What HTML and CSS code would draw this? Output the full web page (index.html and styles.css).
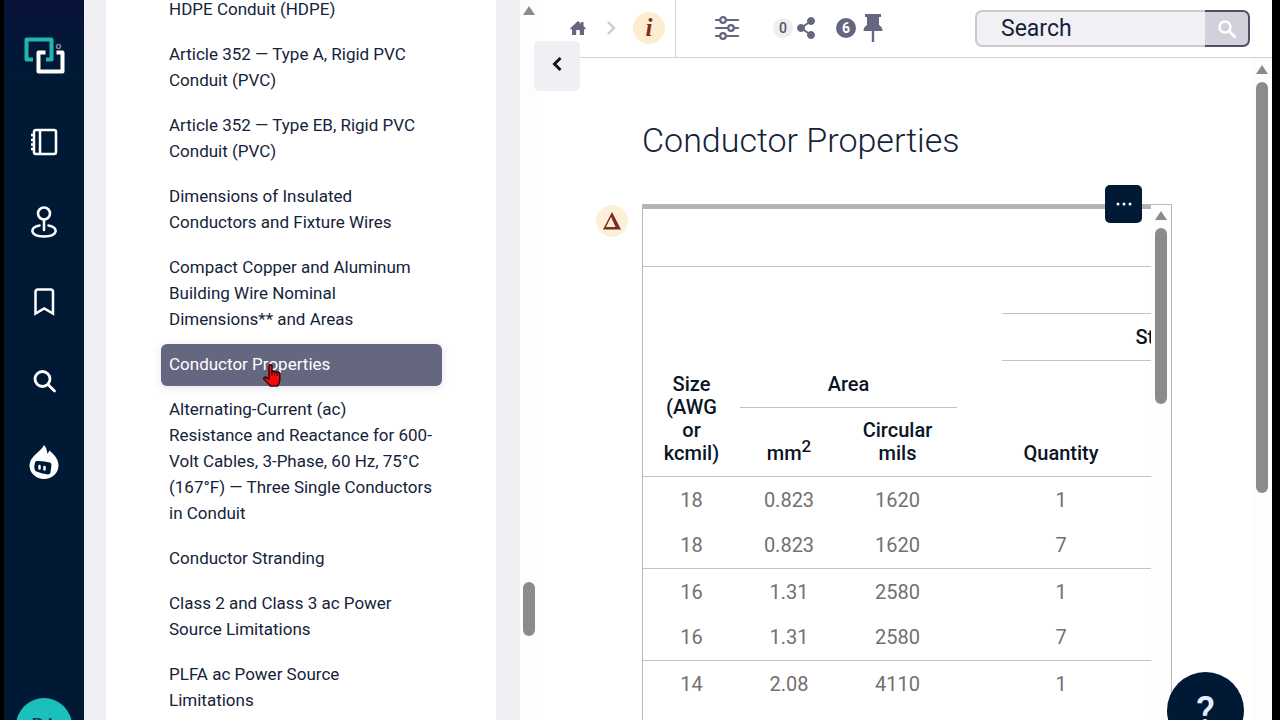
FILE: index.html
```html
<!DOCTYPE html>
<html lang="en">
<head>
    <meta charset="UTF-8">
    <meta name="viewport" content="width=device-width, initial-scale=1.0">
    <title>Conductor Properties</title>
    <link rel="stylesheet" href="styles.css">
</head>
<body>
<div class="app">
    <nav class="rail" aria-label="Main">
        <a href="#" class="logo" aria-label="Home">
            <svg width="42" height="40" viewBox="0 0 42 40" fill="none" stroke-width="4" stroke-linejoin="round">
                <path d="M10 23.5H3.5V3.5H28.500V23.500H23" stroke="#22b5b0"/>
                <path d="M22.500 16.500H15.500V35.500H39.500V16.500H33.500" stroke="#fff"/>
                <circle cx="35.500" cy="10.500" r="2" stroke="#77859a" stroke-width="1.500"/>
            </svg>
        </a>
        <a href="#" class="rail-link" aria-label="Publications">
            <svg width="32" height="32" viewBox="0 0 32 32" fill="none" stroke="#fff" stroke-width="2.500">
                <rect x="6" y="4" width="22" height="24" rx="2"/>
                <path d="M12 4V28M3 9H7M3 14H7M3 18.500H7M3 23H7"/>
            </svg>
        </a>
        <a href="#" class="rail-link" aria-label="Situations">
            <svg width="32" height="32" viewBox="0 0 32 32" fill="none" stroke="#fff" stroke-width="2.600" stroke-linecap="round">
                <circle cx="16" cy="7.500" r="6"/>
                <path d="M16 14V24M11.500 19.500C1 21 1.500 30.500 16 30.500S31 21 20.500 19.500"/>
            </svg>
        </a>
        <a href="#" class="rail-link" aria-label="Bookmarks">
            <svg width="32" height="32" viewBox="0 0 32 32" fill="none" stroke="#fff" stroke-width="2.500">
                <path d="M7.500 27.500V6Q7.500 3.500 10 3.500H22.500Q25 3.500 25 6V27.500L16.250 22.500Z"/>
            </svg>
        </a>
        <a href="#" class="rail-link" aria-label="Search the code">
            <svg width="32" height="32" viewBox="0 0 32 32" fill="none" stroke="#fff" stroke-width="2.800" stroke-linecap="round">
                <circle cx="14.500" cy="13" r="7.500"/>
                <path d="M20 18.500L26.500 25"/>
            </svg>
        </a>
        <a href="#" class="rail-link" aria-label="Assistant">
            <svg width="32" height="36" viewBox="0 0 32 36">
                <path d="M16 1C13 8 1.500 12 1.500 21.500A14.500 13.500 0 0 0 30.500 21.500C30.500 14 25 10 21.500 6.500L19.500 10C19 6 18 3 16 1Z" fill="#fff"/>
                <path d="M8.500 17Q15 16.500 22 18.500Q23.500 19 23.500 21L22.500 28.500Q22 30.500 20 30.500Q13 29.500 8.500 27.500Q7 27 6.500 25Q6 21.500 7 18.500Q7.500 17 8.500 17Z" fill="#001a35"/>
                <path d="M11.500 22V24.500M16.500 23V25.500" stroke="#fff" stroke-width="2.500" stroke-linecap="round"/>
            </svg>
        </a>
        <button class="avatar" type="button">RA</button>
    </nav>

    <aside class="toc">
        <ul class="toc-list">
            <li><a href="#">HDPE Conduit (HDPE)</a></li>
            <li><a href="#">Article 352 — Type A, Rigid PVC Conduit (PVC)</a></li>
            <li><a href="#">Article 352 — Type EB, Rigid PVC Conduit (PVC)</a></li>
            <li><a href="#">Dimensions of Insulated Conductors and Fixture Wires</a></li>
            <li><a href="#">Compact Copper and Aluminum Building Wire Nominal Dimensions** and Areas</a></li>
            <li>
                <a href="#" class="active" aria-current="page">Conductor Properties</a>
                <svg class="pointer" width="20" height="25" viewBox="0 0 20 25">
                    <path d="M7.500 2Q9.500 1 10 3V9Q11.500 7.800 12.500 9Q14 7.800 15 9.500Q17.500 8.800 17.800 11V17Q17.500 20 15.500 23H8.500Q6.500 20 2 16.500Q1 14.500 3.500 14L7 16V3Z" fill="#f20d0d" stroke="#3b0508" stroke-width="1.500" stroke-linejoin="round"/>
                    <path d="M10 8V13M12.600 9V13M15.200 9.500V13" stroke="#3b0508" stroke-width="1"/>
                </svg>
            </li>
            <li><a href="#">Alternating-Current (ac)<br>Resistance and Reactance for 600-Volt Cables, 3-Phase, 60 Hz, 75°C (167°F) — Three Single Conductors in Conduit</a></li>
            <li><a href="#">Conductor Stranding</a></li>
            <li><a href="#">Class 2 and Class 3 ac Power Source Limitations</a></li>
            <li><a href="#">PLFA ac Power Source<br>Limitations</a></li>
        </ul>
    </aside>
    <div class="scrollbar toc-scrollbar">
        <span class="scroll-arrow"></span>
        <span class="scroll-thumb"></span>
    </div>

    <main class="main">
        <button class="collapse" type="button" aria-label="Collapse contents">
            <svg width="14" height="18" viewBox="0 0 14 18" fill="none" stroke="#0b1526" stroke-width="3"><path d="M10.500 3L4.500 9L10.500 15"/></svg>
        </button>
        <header class="topbar">
            <div class="crumbs">
                <a href="#" aria-label="Home">
                    <svg width="16" height="16" viewBox="0 0 16 16" fill="#65667f"><path d="M8 1L11 3.800V2H13.500V6L16 8.500L15 9.500L14 8.800V15H9.800V10H6.200V15H2V8.800L1 9.500L0 8.500Z"/></svg>
                </a>
                <svg width="10" height="16" viewBox="0 0 10 16" fill="none" stroke="#cfcfd4" stroke-width="2.500"><path d="M2 2L8 8L2 14"/></svg>
                <span class="info">i</span>
            </div>
            <div class="tools">
                <button class="tool filters" type="button" aria-label="Filters">
                    <svg width="24" height="24" viewBox="0 0 24 24" fill="none" stroke="#65667f" stroke-width="2.200" stroke-linecap="round">
                        <path d="M1 4H5M11 4H23M1 12H13M19 12H23M1 20H5M11 20H23"/>
                        <circle cx="8" cy="4" r="2.800"/><circle cx="16" cy="12" r="2.800"/><circle cx="8" cy="20" r="2.800"/>
                    </svg>
                </button>
                <button class="tool" type="button" aria-label="Share">
                    <span class="count">0</span>
                    <svg width="20" height="24" viewBox="0 0 20 24" fill="#65667f" stroke="#65667f">
                        <path d="M15 5L5 12L15 19" fill="none" stroke-width="2"/>
                        <circle cx="15" cy="5" r="3.500"/><circle cx="5" cy="12" r="3.500"/><circle cx="15" cy="19" r="3.500"/>
                    </svg>
                </button>
                <button class="tool" type="button" aria-label="Pins">
                    <span class="count count-dark">6</span>
                    <svg width="20" height="28" viewBox="0 0 20 28" fill="#65667f"><path d="M2 0H18V3H16V11Q19.500 13 19.500 17H11.200V28H8.800V17H.5Q.5 13 4 11V3H2Z"/></svg>
                </button>
            </div>
            <form class="search">
                <input type="text" placeholder="Search" aria-label="Search">
                <button type="button" aria-label="Submit search">
                    <svg width="20" height="20" viewBox="0 0 20 20" fill="none" stroke="#fff" stroke-width="2.500"><circle cx="8" cy="8" r="5.500"/><path d="M12 12L18.500 18.500"/></svg>
                </button>
            </form>
        </header>

        <div class="page">
            <section class="content">
                <h1>Conductor Properties</h1>
                <div class="table-row">
                    <span class="delta">
                        <svg width="20" height="20" viewBox="0 0 20 20"><path d="M10 1L19 18.500H1ZM9 6L4 16H13.500Z" fill="#7d2d22" fill-rule="evenodd"/></svg>
                    </span>
                    <div class="table-box">
                        <button class="more" type="button" aria-label="More options">
                            <svg width="16" height="4" viewBox="0 0 16 4" fill="#fff"><circle cx="2" cy="2" r="1.500"/><circle cx="8" cy="2" r="1.500"/><circle cx="14" cy="2" r="1.500"/></svg>
                        </button>
                        <div class="table-clip">
                            <table>
                                <colgroup>
                                    <col class="col-size">
                                    <col class="col-mm">
                                    <col class="col-mils">
                                    <col class="col-gap">
                                    <col class="col-qty">
                                    <col class="col-rest">
                                </colgroup>
                                <thead>
                                    <tr class="title-row"><td colspan="6" class="line"></td></tr>
                                    <tr>
                                        <th rowspan="4" class="line">Size (AWG or kcmil)</th>
                                        <td colspan="3" rowspan="2"></td>
                                        <td colspan="2" class="line"></td>
                                    </tr>
                                    <tr><th colspan="2" class="line">Stranding</th></tr>
                                    <tr>
                                        <th colspan="2" class="line">Area</th>
                                        <td></td>
                                        <td colspan="2"></td>
                                    </tr>
                                    <tr class="names">
                                        <th class="line">mm<sup>2</sup></th>
                                        <th class="line">Circular mils</th>
                                        <td class="line"></td>
                                        <th class="line">Quantity</th>
                                        <td class="line"></td>
                                    </tr>
                                </thead>
                                <tbody>
                                    <tr><td>18</td><td>0.823</td><td>1620</td><td></td><td>1</td><td></td></tr>
                                    <tr><td>18</td><td>0.823</td><td>1620</td><td></td><td>7</td><td></td></tr>
                                    <tr><td>16</td><td>1.31</td><td>2580</td><td></td><td>1</td><td></td></tr>
                                    <tr><td>16</td><td>1.31</td><td>2580</td><td></td><td>7</td><td></td></tr>
                                    <tr><td>14</td><td>2.08</td><td>4110</td><td></td><td>1</td><td></td></tr>
                                </tbody>
                            </table>
                        </div>
                        <div class="scrollbar table-scrollbar">
                            <span class="scroll-arrow"></span>
                            <span class="scroll-thumb"></span>
                        </div>
                    </div>
                </div>
            </section>
            <div class="scrollbar page-scrollbar">
                <span class="scroll-arrow"></span>
                <span class="scroll-thumb"></span>
            </div>
        </div>
    </main>
    <button class="help" type="button" aria-label="Help">?</button>
</div>
</body>
</html>
```
FILE: styles.css
```css
* {
    box-sizing: border-box;
}
body {
    margin: 0;
    background: #000;
    font-family: Roboto, "Liberation Sans", sans-serif;
    color: #14233a;
}
button {
    font-family: inherit;
    border: none;
    padding: 0;
    cursor: pointer;
}
svg {
    display: block;
    flex: none;
}
.app {
    position: relative;
    display: flex;
    height: 100vh;
    padding: 0 8px 0 4px;
    overflow: hidden;
}

/* left icon rail */
.rail {
    flex: 0 0 80px;
    display: flex;
    flex-direction: column;
    align-items: center;
    gap: 44px;
    padding-top: 36px;
    background: linear-gradient(#08123a, #001a35 80px);
}
.logo {
    margin-bottom: 4px;
}
.rail-link {
    display: flex;
    align-items: center;
    height: 36px;
}
.avatar {
    flex: none;
    width: 56px;
    height: 56px;
    margin-top: auto;
    margin-bottom: -34px;
    border-radius: 50%;
    background: #1bc0bd;
    color: #0b3a50;
    font-size: 20px;
}

/* table of contents */
.toc {
    flex: 0 0 436px;
    padding: 0 54px 0 55px;
    border: solid #f0eff3;
    border-width: 0 24px 0 22px;
    background: #fff;
}
.toc-list {
    display: flex;
    flex-direction: column;
    gap: 3px;
    margin: -11px 0 0;
    padding: 0;
    list-style: none;
}
.toc-list li {
    position: relative;
}
.toc-list a {
    display: block;
    padding: 7px 8px 9px;
    border-radius: 6px;
    font-size: 17px;
    line-height: 26px;
    color: #14233a;
    text-decoration: none;
}
.toc-list .active {
    background: #65667f;
    color: #fff;
    box-shadow: 0 2px 8px rgba(80, 80, 130, 0.15);
}
.pointer {
    position: absolute;
    top: 19px;
    left: 101px;
}

/* scrollbars */
.scrollbar {
    flex: 0 0 18px;
    display: flex;
    flex-direction: column;
    align-items: center;
    background: #fdfdfe;
}
.scroll-arrow {
    border: 6px solid transparent;
    border-top-width: 0;
    border-bottom: 9px solid #8b8b8b;
}
.scroll-thumb {
    width: 12px;
    border-radius: 6px;
    background: #8b8b8b;
}
.toc-scrollbar {
    padding-top: 6px;
}
.toc-scrollbar .scroll-thumb {
    height: 54px;
    margin-top: 567px;
}
.page-scrollbar {
    flex-basis: 20px;
    padding-top: 7px;
}
.page-scrollbar .scroll-thumb {
    height: 411px;
    margin-top: 8px;
}
.table-scrollbar {
    flex-basis: 20px;
    padding-top: 6px;
}
.table-scrollbar .scroll-thumb {
    height: 176px;
    margin-top: 8px;
}

/* main column */
.main {
    position: relative;
    flex: 1;
    min-width: 0;
    display: flex;
    flex-direction: column;
    background: #fff;
}
.topbar {
    flex: 0 0 58px;
    display: flex;
    align-items: center;
    padding-right: 22px;
    border-bottom: 1px solid #d2d2d2;
}
.crumbs {
    align-self: stretch;
    flex: 0 0 138px;
    display: flex;
    align-items: center;
    gap: 20px;
    padding: 0 0 2px 32px;
    border-right: 1px solid #d2d2d2;
}
.info {
    display: flex;
    align-items: center;
    justify-content: center;
    width: 32px;
    height: 32px;
    margin-left: -3px;
    border-radius: 50%;
    background: #fdecd0;
    color: #7d2d22;
    font: italic bold 25px "Liberation Serif", serif;
}
.collapse {
    position: absolute;
    top: 41px;
    left: -4px;
    display: flex;
    align-items: center;
    justify-content: center;
    width: 46px;
    height: 50px;
    padding-bottom: 4px;
    border-radius: 5px;
    background: #f0f0f4;
}
.tools {
    display: flex;
    align-items: center;
    gap: 20px;
    padding: 0 0 2px 39px;
}
.tool {
    display: flex;
    align-items: center;
    gap: 3px;
    background: none;
}
.filters {
    margin-right: 14px;
}
.count {
    width: 20px;
    border-radius: 50%;
    background: #f0eef1;
    color: #55566a;
    font-size: 14px;
    font-weight: 500;
    line-height: 20px;
}
.count-dark {
    margin-right: 4px;
    background: #65667f;
    color: #fff;
    font-weight: 700;
}
.search {
    flex: 0 0 275px;
    display: flex;
    min-width: 0;
    height: 37px;
    margin-left: auto;
}
.search input {
    flex: 1;
    min-width: 0;
    padding: 0 24px;
    border: 2px solid #cbcace;
    border-right: none;
    border-radius: 7px 0 0 7px;
    background: #f1f0f4;
    font: 23px Roboto, sans-serif;
    color: #14233a;
}
.search input::placeholder {
    color: #14233a;
    opacity: 1;
}
.search button {
    display: flex;
    align-items: center;
    justify-content: center;
    width: 45px;
    border: 2px solid #504f68;
    border-left: none;
    border-radius: 0 7px 7px 0;
    background: #d2d0da;
}

/* article */
.page {
    flex: 1;
    display: flex;
    min-height: 0;
}
.content {
    flex: 1;
    min-width: 0;
    display: flex;
    flex-direction: column;
    padding: 58px 80px 0 58px;
}
h1 {
    margin: 0 0 40px 46px;
    font-size: 34px;
    font-weight: 300;
    line-height: 48px;
}
.table-row {
    flex: 1;
    min-height: 0;
    display: flex;
    gap: 14px;
}
.delta {
    flex: none;
    display: flex;
    align-items: center;
    justify-content: center;
    width: 32px;
    height: 32px;
    margin-top: 1px;
    border-radius: 50%;
    background: #fdf0d9;
}
.table-box {
    position: relative;
    flex: 1;
    min-width: 0;
    display: flex;
    border: 1px solid #b9b9b9;
    border-bottom: none;
}
.table-clip {
    flex: 1;
    overflow: hidden;
}
.more {
    position: absolute;
    top: -20px;
    right: 29px;
    display: flex;
    align-items: center;
    justify-content: center;
    width: 37px;
    height: 38px;
    border-radius: 5px;
    background: #001a35;
}
table {
    table-layout: fixed;
    width: 712px;
    border-top: 4px solid #b3b3b3;
    border-spacing: 0;
}
.col-size {
    width: 97px;
}
.col-mm {
    width: 98px;
}
.col-mils {
    width: 119px;
}
.col-gap {
    width: 45px;
}
.col-qty {
    width: 118px;
}
.col-rest {
    width: 235px;
}
tr {
    height: 46px;
}
thead tr {
    height: 47px;
}
th, td {
    padding: 0;
    font-size: 20px;
    line-height: 23px;
    text-align: center;
}
th {
    padding: 0 16px 11px;
    font-weight: 500;
    color: #0b1526;
    vertical-align: bottom;
}
td {
    color: #717171;
}
.line, tbody tr:nth-child(even) td {
    border-bottom: 1px solid #c2c2c2;
}
thead .title-row {
    height: 58px;
}
thead .names {
    height: 69px;
}
sup {
    font-size: 17px;
    line-height: 0;
}

/* floating help button */
.help {
    position: absolute;
    right: 36px;
    bottom: -29px;
    width: 77px;
    height: 77px;
    border-radius: 50%;
    background: #001a35;
    color: #e6edfb;
    font-size: 38px;
    font-weight: 500;
}
```
